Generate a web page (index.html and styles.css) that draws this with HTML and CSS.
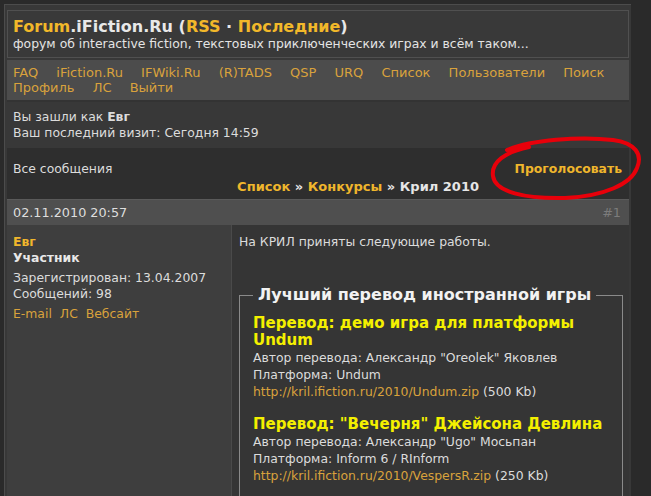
FILE: index.html
```html
<html>
	<head>
		<meta charset="utf-8" />
		<title>Forum.iFiction.Ru</title>
		<link rel="stylesheet" href="styles.css">
	</head>
	<body>
		<div class="page">
			<div class="header">
				<div class="title"><span class="t-forum">Forum</span>.iFiction.Ru (<a href="#">RSS</a> &middot; <a href="#">Последние</a>)</div>
				<div class="subtitle">форум об interactive fiction, текстовых приключенческих играх и всём таком...</div>
			</div>
			<div class="nav">
				<a href="#">FAQ</a>
				<a href="#">iFiction.Ru</a>
				<a href="#">IFWiki.Ru</a>
				<a href="#">(R)TADS</a>
				<a href="#">QSP</a>
				<a href="#">URQ</a>
				<a href="#">Список</a>
				<a href="#">Пользователи</a>
				<a href="#">Поиск</a>
				<a href="#">Профиль</a>
				<a href="#">ЛС</a>
				<a href="#">Выйти</a>
			</div>
			<div class="welcome">
				<div>Вы зашли как <b>Евг</b></div>
				<div>Ваш последний визит: Сегодня 14:59</div>
			</div>
			<div class="actions">
				<div class="actions-row">
					<span>Все сообщения</span>
					<a class="vote" href="#">Проголосовать</a>
				</div>
				<div class="crumbs"><a href="#">Список</a> &raquo; <a href="#">Конкурсы</a> &raquo; Крил 2010</div>
				<svg class="circle" width="160" height="70" viewBox="0 0 160 70">
					<path d="M22 14 C45 4 95 0 128 4 C150 7 158 18 152 32 C146 48 120 60 80 62 C40 63 10 56 8 40 C6 26 20 16 44 11" fill="none" stroke="#e8000a" stroke-width="4" stroke-linecap="round"/>
				</svg>
			</div>
			<div class="post-head">
				<span>02.11.2010 20:57</span>
				<span class="num">#1</span>
			</div>
			<div class="post-body">
				<div class="author">
					<div class="a-name">Евг</div>
					<div class="a-title">Участник</div>
					<div class="a-info">Зарегистрирован: 13.04.2007<br>Сообщений: 98</div>
					<div class="a-links"><a href="#">E-mail</a> <a href="#">ЛС</a> <a href="#">Вебсайт</a></div>
				</div>
				<div class="message">
					<p>На КРИЛ приняты следующие работы.</p>
					<fieldset>
						<legend>Лучший перевод иностранной игры</legend>
						<div class="entry">
							<div class="e-title">Перевод: демо игра для платформы Undum</div>
							<div>Автор перевода: Александр "Oreolek" Яковлев</div>
							<div>Платформа: Undum</div>
							<div><a href="#">http://kril.ifiction.ru/2010/Undum.zip</a> (500 Kb)</div>
						</div>
						<div class="entry">
							<div class="e-title">Перевод: "Вечерня" Джейсона Девлина</div>
							<div>Автор перевода: Александр "Ugo" Мосьпан</div>
							<div>Платформа: Inform 6 / RInform</div>
							<div><a href="#">http://kril.ifiction.ru/2010/VespersR.zip</a> (250 Kb)</div>
						</div>
					</fieldset>
				</div>
			</div>
		</div>
	</body>
</html>
```
FILE: styles.css
```css
body { margin: 0; background-color: #2a2a2a; font-family: "DejaVu Sans", Verdana, sans-serif; font-size: 12.4px; line-height: 16px; color: #dcdcdc; }
a { color: #d9a23c; text-decoration: none; }
.page { margin: 4px 20px 0 4px; padding: 5px 2px 0 2px; background-color: #383838; border-top: 1px solid #4c4c4c; border-left: 1px solid #4c4c4c; }

.header { border: 1px solid #505050; background-color: #393939; padding: 7px 5px 5px 5px; }
.title { font-size: 16px; font-weight: bold; line-height: 18px; color: #e8e8e8; }
.title a, .t-forum { color: #f2b82a; }
.subtitle { color: #e4e4e4; }

.nav { background-color: #4c4c4c; margin-top: 2px; padding: 5px 0 5px 6px; font-size: 13px; line-height: 15px; }
.nav a { margin-right: 14px; }

.welcome { background-color: #383838; padding: 7px 6px 7px 6px; border-top: 2px solid #333; }

.actions { position: relative; background-color: #2e2e2e; padding: 13px 6px 4px 6px; }
.actions-row { display: flex; justify-content: space-between; }
.vote { font-weight: bold; color: #f0b62c; margin-right: 1px; }
.crumbs { text-align: right; font-size: 13px; font-weight: bold; color: #e6e6e6; padding-right: 144px; margin-top: 2px; }
.crumbs a { color: #f0b62c; }
.circle { position: absolute; right: -16px; top: -12px; }

.post-head { display: flex; justify-content: space-between; background-color: #4f4f4f; color: #dedede; font-size: 12.8px; padding: 5px 8px 4px 6px; border-top: 1px solid #5a5a5a; }
.num { color: #7c7c7c; }

.post-body { display: grid; grid-template-columns: 225px 1fr; min-height: 280px; }
.author { background-color: #3e3e3e; padding: 9px 6px; border-right: 1px solid #4a4a4a; }
.a-name { font-weight: bold; color: #f0b62c; }
.a-title { font-weight: bold; color: #e8e8e8; margin-bottom: 4px; }
.a-info { margin-bottom: 4px; }
.a-links a { margin-right: 4px; }

.message { background-color: #353535; padding: 9px 6px 0 7px; }
.message p { margin: 0 0 36px 0; }
fieldset { border: 1px solid #8a8a8a; margin: 0; padding: 0 10px 0 13px; }
legend { font-size: 16px; font-weight: bold; color: #f2f2f2; padding: 0 5px; margin-left: 0; line-height: 18px; }
.entry { margin-top: 11px; margin-bottom: 16px; line-height: 17px; }
.e-title { font-size: 15px; font-weight: bold; color: #f4f000; }
```
